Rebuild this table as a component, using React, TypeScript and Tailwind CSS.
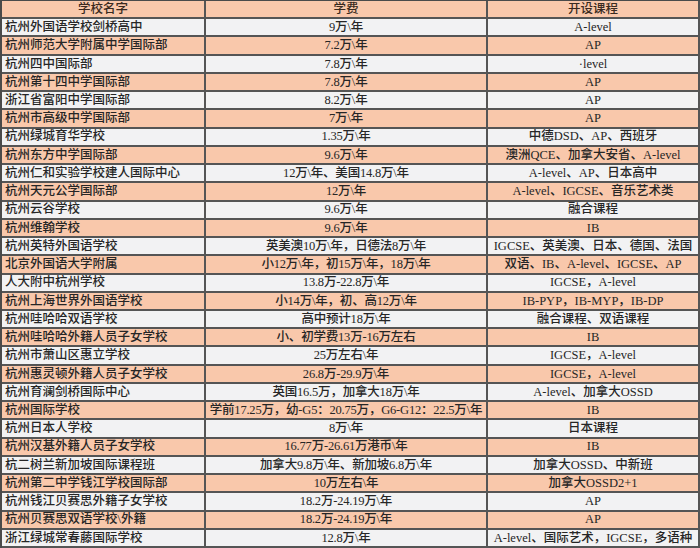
const rows: [string, string, string][] = [
  ["杭州外国语学校剑桥高中", "9万\\年", "A-level"],
  ["杭州师范大学附属中学国际部", "7.2万\\年", "AP"],
  ["杭州四中国际部", "7.8万\\年", "·level"],
  ["杭州第十四中学国际部", "7.8万\\年", "AP"],
  ["浙江省富阳中学国际部", "8.2万\\年", "AP"],
  ["杭州市高级中学国际部", "7万\\年", "AP"],
  ["杭州绿城育华学校", "1.35万\\年", "中德DSD、AP、西班牙"],
  ["杭州东方中学国际部", "9.6万\\年", "澳洲QCE、加拿大安省、A-level"],
  ["杭州仁和实验学校建人国际中心", "12万\\年、美国14.8万\\年", "A-level、AP、日本高中"],
  ["杭州天元公学国际部", "12万\\年", "A-level、IGCSE、音乐艺术类"],
  ["杭州云谷学校", "9.6万\\年", "融合课程"],
  ["杭州维翰学校", "9.6万\\年", "IB"],
  ["杭州英特外国语学校", "英美澳10万\\年，日德法8万\\年", "IGCSE、英美澳、日本、德国、法国"],
  ["北京外国语大学附属", "小12万\\年，初15万\\年，18万\\年", "双语、IB、A-level、IGCSE、AP"],
  ["人大附中杭州学校", "13.8万-22.8万\\年", "IGCSE，A-level"],
  ["杭州上海世界外国语学校", "小14万\\年，初、高12万\\年", "IB-PYP，IB-MYP，IB-DP"],
  ["杭州哇哈哈双语学校", "高中预计18万\\年", "融合课程、双语课程"],
  ["杭州哇哈哈外籍人员子女学校", "小、初学费13万-16万左右", "IB"],
  ["杭州市萧山区惠立学校", "25万左右\\年", "IGCSE，A-level"],
  ["杭州惠灵顿外籍人员子女学校", "26.8万-29.9万\\年", "IGCSE，A-level"],
  ["杭州育澜剑桥国际中心", "英国16.5万，加拿大18万\\年", "A-level、加拿大OSSD"],
  ["杭州国际学校", "学前17.25万，幼-G5：20.75万，G6-G12：22.5万\\年", "IB"],
  ["杭州日本人学校", "8万\\年", "日本课程"],
  ["杭州汉基外籍人员子女学校", "16.77万-26.61万港币\\年", "IB"],
  ["杭二树兰新加坡国际课程班", "加拿大9.8万\\年、新加坡6.8万\\年", "加拿大OSSD、中新班"],
  ["杭州第二中学钱江学校国际部", "10万左右\\年", "加拿大OSSD2+1"],
  ["杭州钱江贝赛思外籍子女学校", "18.2万-24.19万\\年", "AP"],
  ["杭州贝赛思双语学校\\外籍", "18.2万-24.19万\\年", "AP"],
  ["浙江绿城常春藤国际学校", "12.8万\\年", "A-level、国际艺术，IGCSE，多语种"],
];

const font = { fontFamily: '"Liberation Serif", "Noto Sans CJK SC", serif' };

export default function App() {
  return (
    <div
      className="grid h-[548px] w-[700px] grid-cols-[204px_282px_212px] grid-rows-[repeat(30,1fr)] overflow-hidden border-t border-l-2 border-[#4a4a4a] bg-[#f2f2f3] text-[12.5px] leading-none font-medium text-[#262626]"
      style={font}
    >
      {["学校名字", "学费", "开设课程"].map((h) => (
        <div
          key={h}
          className="flex items-center justify-center border-r-2 border-b-2 border-[#555] bg-[#f9c8ab] text-[#3a2a20]"
        >
          {h}
        </div>
      ))}
      {rows.map((r, i) => {
        const bg = i % 2 === 1 ? "bg-[#f9c8ab]" : "bg-[#f2f2f3]";
        return [
          <div
            key={`a${i}`}
            className={`flex items-center overflow-hidden whitespace-nowrap border-r-2 border-b-2 border-[#555] pl-[3px] ${bg}`}
          >
            {r[0]}
          </div>,
          <div
            key={`b${i}`}
            className={`flex items-center justify-center overflow-hidden whitespace-nowrap border-r-2 border-b-2 border-[#555] tracking-[-0.2px] ${bg}`}
          >
            {r[1]}
          </div>,
          <div
            key={`c${i}`}
            className={`flex items-center justify-center overflow-hidden whitespace-nowrap border-r-2 border-b-2 border-[#555] ${bg}`}
          >
            {r[2]}
          </div>,
        ];
      })}
    </div>
  );
}
